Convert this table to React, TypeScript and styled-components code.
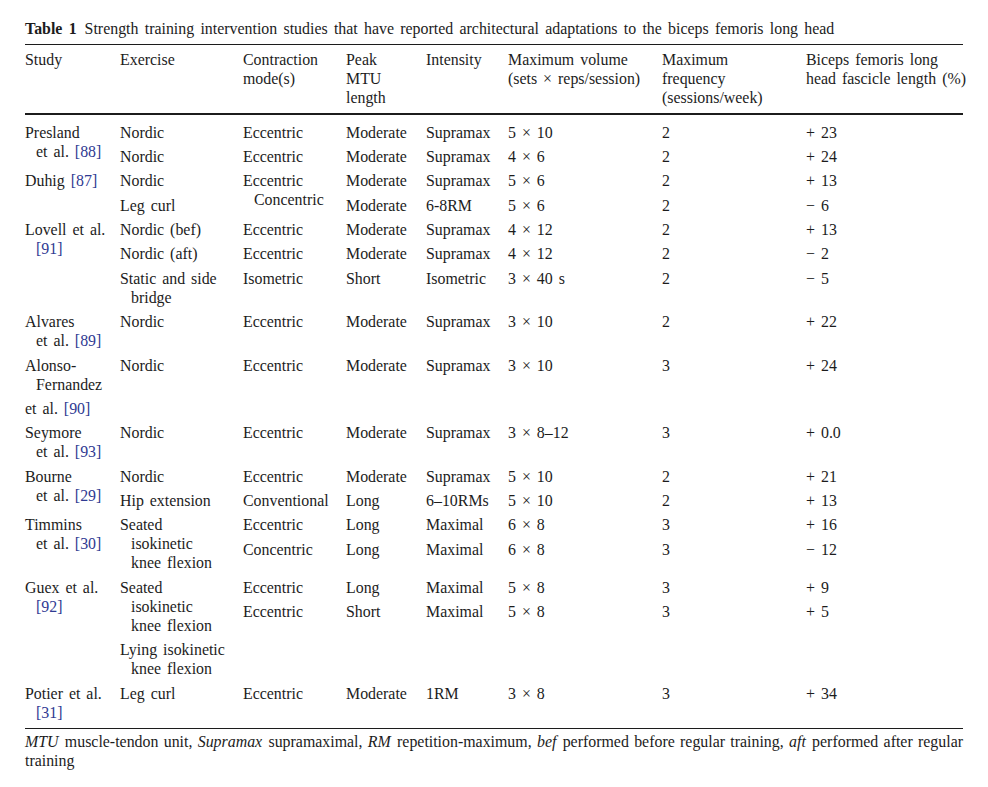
import React from "react";
import styled, { createGlobalStyle } from "styled-components";

const GlobalStyle = createGlobalStyle`
  html, body { margin: 0; padding: 0; background: #ffffff; }
  body { font-family: "Liberation Serif", "Times New Roman", serif; }
`;

const Page = styled.div`
  padding: 18.5px 25px 0 25px;
  width: 938px;
  font-family: "Liberation Serif", "Times New Roman", serif;
  font-size: 15.9px;
  word-spacing: 2px;
  line-height: 19px;
  color: #1c1c1c;
`;

const Caption = styled.div`
  margin-bottom: 6.5px;
  white-space: nowrap;
  word-spacing: 2.3px;
`;

const CaptionLabel = styled.span`
  font-weight: bold;
  margin-right: 8px;
`;

const Frame = styled.div`
  border-top: 1px solid #1c1c1c;
  border-bottom: 1px solid #1c1c1c;
`;

const Table = styled.table`
  width: 938px;
  table-layout: fixed;
  border-collapse: separate;
  border-spacing: 0;
  font-size: inherit;
  line-height: inherit;
  color: inherit;
`;

const Col = styled.col<{ $w: number }>`
  width: ${(p) => p.$w}px;
`;

const HeadCell = styled.th`
  padding: 4.5px 0 6.5px 0;
  text-align: left;
  vertical-align: top;
  font-weight: normal;
  white-space: nowrap;
  border-bottom: 2px solid #1c1c1c;
`;

const Body = styled.tbody`
  & > tr:first-child > td {
    padding-top: 7.5px;
  }
  & > tr:last-child > td {
    padding-bottom: 6px;
  }
`;

const Row = styled.tr<{ $h?: number }>`
  height: ${(p) => (p.$h ? `${p.$h}px` : "auto")};
`;

const Cell = styled.td<{ $flush?: boolean }>`
  padding: 2.7px 0 2.7px ${(p) => (p.$flush ? 0 : 11)}px;
  text-indent: ${(p) => (p.$flush ? 0 : -11)}px;
  text-align: left;
  vertical-align: top;
  white-space: nowrap;
`;

const Ref = styled.span`
  color: #2f3a92;
`;

const Notes = styled.div`
  margin-top: 3.5px;
  line-height: 19px;
  text-align: justify;
  word-spacing: 0;
`;

const Abbr = styled.i`
  font-style: italic;
  padding-right: 1px;
`;

const Phrase = styled.span``;

const widths = [95, 123, 103, 80, 82, 154, 144, 157];

const MINUS = "\u2212";

const Values: React.FC<{ v: string[] }> = ({ v }) => (
  <>
    {v.map((t, i) => (
      <Cell key={i}>{t}</Cell>
    ))}
  </>
);

const Empty: React.FC<{ n: number }> = ({ n }) => (
  <>
    {Array.from({ length: n }).map((_, i) => (
      <Cell key={i} />
    ))}
  </>
);

export default function App() {
  return (
    <>
      <GlobalStyle />
      <Page>
        <Caption>
          <CaptionLabel>Table 1</CaptionLabel>
          Strength training intervention studies that have reported architectural adaptations to the biceps femoris long head
        </Caption>
        <Frame>
          <Table>
            <colgroup>
              {widths.map((w, i) => (
                <Col key={i} $w={w} />
              ))}
            </colgroup>
            <thead>
              <tr>
                <HeadCell>Study</HeadCell>
                <HeadCell>Exercise</HeadCell>
                <HeadCell>
                  Contraction
                  <br />
                  mode(s)
                </HeadCell>
                <HeadCell>
                  Peak
                  <br />
                  MTU
                  <br />
                  length
                </HeadCell>
                <HeadCell>Intensity</HeadCell>
                <HeadCell>
                  Maximum volume
                  <br />
                  (sets × reps/session)
                </HeadCell>
                <HeadCell>
                  Maximum
                  <br />
                  frequency
                  <br />
                  (sessions/week)
                </HeadCell>
                <HeadCell>
                  Biceps femoris long
                  <br />
                  head fascicle length (%)
                </HeadCell>
              </tr>
            </thead>
            <Body>
              {/* Presland */}
              <Row>
                <Cell rowSpan={2}>
                  Presland
                  <br />
                  et al. <Ref>[88]</Ref>
                </Cell>
                <Values v={["Nordic", "Eccentric", "Moderate", "Supramax", "5 × 10", "2", "+ 23"]} />
              </Row>
              <Row>
                <Values v={["Nordic", "Eccentric", "Moderate", "Supramax", "4 × 6", "2", "+ 24"]} />
              </Row>

              {/* Duhig */}
              <Row>
                <Cell rowSpan={2}>
                  Duhig <Ref>[87]</Ref>
                </Cell>
                <Cell>Nordic</Cell>
                <Cell rowSpan={2}>
                  Eccentric
                  <br />
                  Concentric
                </Cell>
                <Values v={["Moderate", "Supramax", "5 × 6", "2", "+ 13"]} />
              </Row>
              <Row>
                <Cell>Leg curl</Cell>
                <Values v={["Moderate", "6-8RM", "5 × 6", "2", `${MINUS} 6`]} />
              </Row>

              {/* Lovell */}
              <Row>
                <Cell rowSpan={3}>
                  Lovell et al.
                  <br />
                  <Ref>[91]</Ref>
                </Cell>
                <Values v={["Nordic (bef)", "Eccentric", "Moderate", "Supramax", "4 × 12", "2", "+ 13"]} />
              </Row>
              <Row>
                <Values v={["Nordic (aft)", "Eccentric", "Moderate", "Supramax", "4 × 12", "2", `${MINUS} 2`]} />
              </Row>
              <Row>
                <Cell>
                  Static and side
                  <br />
                  bridge
                </Cell>
                <Values v={["Isometric", "Short", "Isometric", "3 × 40 s", "2", `${MINUS} 5`]} />
              </Row>

              {/* Alvares */}
              <Row>
                <Cell>
                  Alvares
                  <br />
                  et al. <Ref>[89]</Ref>
                </Cell>
                <Values v={["Nordic", "Eccentric", "Moderate", "Supramax", "3 × 10", "2", "+ 22"]} />
              </Row>

              {/* Alonso-Fernandez */}
              <Row>
                <Cell>
                  Alonso-
                  <br />
                  Fernandez
                </Cell>
                <Values v={["Nordic", "Eccentric", "Moderate", "Supramax", "3 × 10", "3", "+ 24"]} />
              </Row>
              <Row>
                <Cell $flush>
                  et al. <Ref>[90]</Ref>
                </Cell>
                <Empty n={7} />
              </Row>

              {/* Seymore */}
              <Row>
                <Cell>
                  Seymore
                  <br />
                  et al. <Ref>[93]</Ref>
                </Cell>
                <Values v={["Nordic", "Eccentric", "Moderate", "Supramax", "3 × 8–12", "3", "+ 0.0"]} />
              </Row>

              {/* Bourne */}
              <Row>
                <Cell rowSpan={2}>
                  Bourne
                  <br />
                  et al. <Ref>[29]</Ref>
                </Cell>
                <Values v={["Nordic", "Eccentric", "Moderate", "Supramax", "5 × 10", "2", "+ 21"]} />
              </Row>
              <Row>
                <Values v={["Hip extension", "Conventional", "Long", "6–10RMs", "5 × 10", "2", "+ 13"]} />
              </Row>

              {/* Timmins */}
              <Row>
                <Cell rowSpan={2}>
                  Timmins
                  <br />
                  et al. <Ref>[30]</Ref>
                </Cell>
                <Cell rowSpan={2}>
                  Seated
                  <br />
                  isokinetic
                  <br />
                  knee flexion
                </Cell>
                <Values v={["Eccentric", "Long", "Maximal", "6 × 8", "3", "+ 16"]} />
              </Row>
              <Row $h={38}>
                <Values v={["Concentric", "Long", "Maximal", "6 × 8", "3", `${MINUS} 12`]} />
              </Row>

              {/* Guex */}
              <Row>
                <Cell rowSpan={3}>
                  Guex et al.
                  <br />
                  <Ref>[92]</Ref>
                </Cell>
                <Cell rowSpan={2}>
                  Seated
                  <br />
                  isokinetic
                  <br />
                  knee flexion
                </Cell>
                <Values v={["Eccentric", "Long", "Maximal", "5 × 8", "3", "+ 9"]} />
              </Row>
              <Row $h={38}>
                <Values v={["Eccentric", "Short", "Maximal", "5 × 8", "3", "+ 5"]} />
              </Row>
              <Row>
                <Cell>
                  Lying isokinetic
                  <br />
                  knee flexion
                </Cell>
                <Empty n={6} />
              </Row>

              {/* Potier */}
              <Row>
                <Cell>
                  Potier et al.
                  <br />
                  <Ref>[31]</Ref>
                </Cell>
                <Values v={["Leg curl", "Eccentric", "Moderate", "1RM", "3 × 8", "3", "+ 34"]} />
              </Row>
            </Body>
          </Table>
        </Frame>
        <Notes>
          <Abbr>MTU</Abbr> muscle-tendon unit, <Abbr>Supramax</Abbr> supramaximal, <Abbr>RM</Abbr> repetition-maximum,{" "}
          <Abbr>bef</Abbr> performed before regular training, <Abbr>aft</Abbr>
          <Phrase> performed after regular </Phrase>
          <Phrase>training</Phrase>
        </Notes>
      </Page>
    </>
  );
}
